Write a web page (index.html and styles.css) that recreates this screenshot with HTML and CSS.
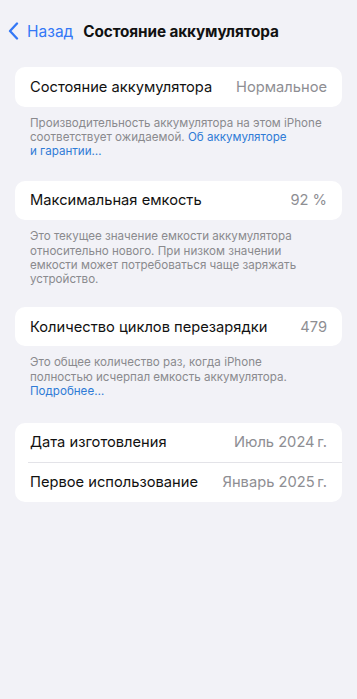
FILE: index.html
```html
<!DOCTYPE html>
<html lang="ru">
<head>
<meta charset="utf-8">
<link rel="stylesheet" href="styles.css">
</head>
<body>
<div class="screen">
  <header class="nav">
    <a class="back">
      <svg class="chev" width="11" height="18" viewBox="0 0 11 18"><path d="M9 1.5 L2 9 L9 16.5" fill="none" stroke="#3478f6" stroke-width="2.3" stroke-linecap="round" stroke-linejoin="round"/></svg>
      <span>Назад</span>
    </a>
    <h1 class="title">Состояние аккумулятора</h1>
  </header>

  <section class="group">
    <div class="card">
      <div class="row"><span class="label">Состояние аккумулятора</span><span class="value">Нормальное</span></div>
    </div>
    <p class="foot"><span>Производительность аккумулятора на этом iPhone</span> <span>соответствует ожидаемой.</span> <a class="link">Об аккумуляторе</a> <a class="link">и&nbsp;гарантии…</a></p>
  </section>

  <section class="group g2">
    <div class="card">
      <div class="row"><span class="label">Максимальная емкость</span><span class="value">92 %</span></div>
    </div>
    <p class="foot">Это текущее значение емкости аккумулятора относительно нового. При низком значении емкости может потребоваться чаще заряжать устройство.</p>
  </section>

  <section class="group g3">
    <div class="card">
      <div class="row"><span class="label">Количество циклов перезарядки</span><span class="value">479</span></div>
    </div>
    <p class="foot"><span>Это общее количество раз, когда iPhone полностью исчерпал емкость аккумулятора.</span> <a class="link">Подробнее…</a></p>
  </section>

  <section class="group g4">
    <div class="card">
      <div class="row"><span class="label">Дата изготовления</span><span class="value">Июль 2024&#8201;г.</span></div>
      <div class="row sep"><span class="label">Первое использование</span><span class="value">Январь 2025&#8201;г.</span></div>
    </div>
  </section>
</div>
</body>
</html>
```

FILE: styles.css
```css
* { box-sizing: border-box; }
html, body { margin: 0; padding: 0; }
body {
  background: #f2f2f7;
  font-family: Inter, "Noto Sans", "Liberation Sans", sans-serif;
  color: #111;
  width: 357px;
  height: 699px;
  overflow: hidden;
}
.screen { padding: 0 15px; }
.nav {
  display: flex;
  align-items: center;
  height: 50px;
  padding-top: 12px;
  margin: 0 -7px;
}
.back {
  display: flex;
  align-items: center;
  gap: 8px;
  color: #3478f6;
  font-size: 15.5px;
}
.chev { display: block; }
.title {
  margin: 0 0 0 10px;
  font-size: 15.3px;
  font-weight: 700;
  letter-spacing: -0.1px;
}
.group { margin-top: 17px; }
.g2 { margin-top: 22px; }
.g3 { margin-top: 20px; }
.g4 { margin-top: 24px; }
.card {
  background: #fff;
  border-radius: 10px;
  overflow: hidden;
}
.row {
  display: flex;
  justify-content: space-between;
  align-items: center;
  height: 39.5px;
  padding: 0 15px;
  font-size: 14.7px;
  position: relative;
}
.row.sep::before {
  content: "";
  position: absolute;
  left: 13px;
  right: 0;
  top: 0;
  border-top: 1px solid #e3e3e8;
}
.label { color: #111; }
.value { color: #8e8e93; }
.foot {
  margin: 9px 0 0;
  padding: 0 15px;
  font-size: 11.6px;
  line-height: 14.4px;
  color: #8a8a8e;
}
.link { color: #2f7bd6; }
```
